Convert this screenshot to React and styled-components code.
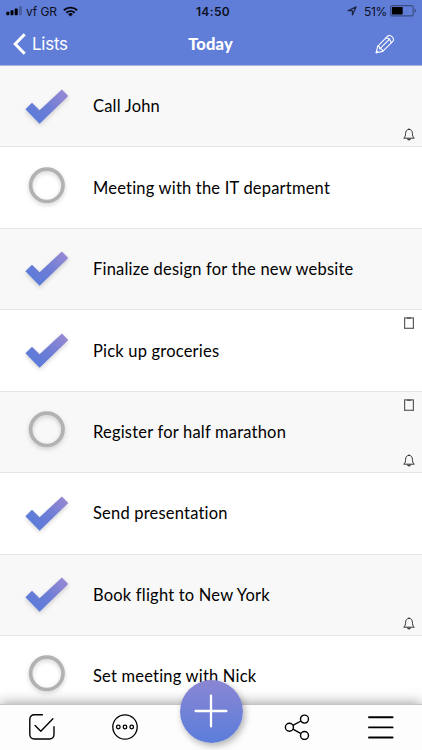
import styled, { createGlobalStyle } from 'styled-components'

const tasks = [
  { id: 1, title: 'Call John', done: true, alarm: true },
  { id: 2, title: 'Meeting with the IT department' },
  { id: 3, title: 'Finalize design for the new website', done: true },
  { id: 4, title: 'Pick up groceries', done: true, note: true },
  { id: 5, title: 'Register for half marathon', note: true, alarm: true },
  { id: 6, title: 'Send presentation', done: true },
  { id: 7, title: 'Book flight to New York', done: true, alarm: true },
  { id: 8, title: 'Set meeting with Nick' },
]

const SignalIcon = () => (
  <svg width="17" height="10" viewBox="0 0 17 10">
    <rect x="0.3" y="5.8" width="3" height="3.4" rx="0.7" />
    <rect x="4.5" y="4.3" width="3" height="4.9" rx="0.7" />
    <rect x="8.7" y="2.4" width="3" height="6.8" rx="0.7" />
    <rect x="12.9" y="0.2" width="3" height="9" rx="0.7" opacity="0.25" />
  </svg>
)

const WifiIcon = () => (
  <svg width="15" height="11" viewBox="0 0 15 11" fill="none" stroke="#06070d" strokeWidth="1.9">
    <path d="M0.9 4.3a9.4 9.4 0 0 1 13.2 0" />
    <path d="M3.3 6.8a6 6 0 0 1 8.4 0" />
    <path d="M7.5 10.6L5.1 8.2a3.4 3.4 0 0 1 4.8 0z" fill="#06070d" stroke="none" />
  </svg>
)

const LocationIcon = () => (
  <svg width="10" height="10" viewBox="0 0 10 10" fill="none" stroke="#1b2340" strokeWidth="1.2" strokeLinejoin="round">
    <path d="M9.1 0.9L5.4 9V4.7H0.9z" />
  </svg>
)

const BatteryIcon = () => (
  <svg width="27" height="12" viewBox="0 0 27 12">
    <rect x="0.6" y="0.6" width="22.6" height="10.3" rx="2" fill="none" stroke="#3b4d83" strokeWidth="1.1" />
    <rect x="1.9" y="1.9" width="10.8" height="7.7" rx="0.8" />
    <path d="M24.6 3.8v4c1-.4 1.4-1.1 1.4-2s-.4-1.6-1.4-2z" fill="#3b4d83" />
  </svg>
)

const BackIcon = () => (
  <svg width="13" height="22" viewBox="0 0 13 22" fill="none" stroke="#fff" strokeWidth="3">
    <path d="M11.7 1.2L2.2 11l9.5 9.8" />
  </svg>
)

const PencilIcon = () => (
  <svg width="20" height="20" viewBox="0 0 20 20" fill="none" stroke="#fff" strokeWidth="1.1" strokeLinejoin="round" strokeLinecap="round">
    <path d="M1.2 18.8L2.6 12.3L12.7 2.2C13.8 1.1 15.6 1.1 17 2.6C18.7 4.1 18.9 6.2 17.8 7.3L7.7 17.4z" />
    <path d="M2.6 12.3C4.2 12.1 4.9 13 4.8 14.8C6.6 14.7 7.6 15.6 7.7 17.4" />
    <path d="M4.8 14.8L14.8 4.9M11 3.9C13.4 3.9 16 6.4 16.1 9" />
    <path d="M1.2 18.8l0.4-2 1.5 1.6z" fill="#fff" />
  </svg>
)

const CheckMark = () => (
  <svg width="44" height="36" viewBox="0 0 44 36">
    <defs>
      <linearGradient id="check" gradientUnits="userSpaceOnUse" x1="8" y1="32" x2="38" y2="2">
        <stop offset="0" stopColor="#5b7bda" />
        <stop offset="0.45" stopColor="#6b7dd6" />
        <stop offset="1" stopColor="#9588d3" />
      </linearGradient>
    </defs>
    <path d="M0.4 20.2L7 13.7L14.6 21.2L36.9 0.4L43.3 6.9L14.6 34.7z" fill="url(#check)" />
  </svg>
)

const EmptyCircle = () => (
  <svg width="44" height="37" viewBox="0 0 44 37">
    <circle cx="21.8" cy="18.3" r="16.2" fill="none" stroke="#b2b2b2" strokeWidth="3.7" />
  </svg>
)

const BellIcon = () => (
  <svg width="12" height="13" viewBox="0 0 12 13" fill="none" stroke="#333" strokeWidth="1" strokeLinejoin="round">
    <path d="M0.7 10.2C2.3 8.9 2.5 7.5 2.6 5.2C2.7 2.8 4 1.4 6 1.4S9.3 2.8 9.4 5.2C9.5 7.5 9.7 8.9 11.3 10.2z" />
    <path d="M4.6 10.6C4.8 12.3 7.2 12.3 7.4 10.6M6 0.4v1" strokeWidth="1.2" />
  </svg>
)

const NoteIcon = () => (
  <svg width="10" height="12" viewBox="0 0 10 12" fill="none" stroke="#5c5c5c" strokeWidth="1.2">
    <rect x="0.6" y="0.9" width="8.8" height="10.4" />
    <path d="M3 1.2h4" strokeWidth="1.5" />
  </svg>
)

const DoneIcon = () => (
  <svg width="26" height="26" viewBox="0 0 26 26" fill="none" stroke="#000" strokeWidth="1.4" strokeLinecap="round" strokeLinejoin="round">
    <path d="M13.4 0.8H5.2A4.4 4.4 0 0 0 0.8 5.2V20.6A4.4 4.4 0 0 0 5.2 25H20.6A4.4 4.4 0 0 0 25 20.6V12.8" />
    <path d="M6.1 11.5L11.8 17.2L23.9 4.8" />
  </svg>
)

const MoreIcon = () => (
  <svg width="26" height="26" viewBox="0 0 26 26" fill="none" stroke="#000" strokeWidth="1.3">
    <circle cx="13" cy="13" r="12.2" />
    <circle cx="6.3" cy="13" r="1.8" />
    <circle cx="13" cy="13" r="1.8" />
    <circle cx="19.7" cy="13" r="1.8" />
  </svg>
)

const ShareIcon = () => (
  <svg width="26" height="26" viewBox="0 0 26 26" fill="none" stroke="#000" strokeWidth="1.4">
    <circle cx="5.4" cy="13.3" r="4" />
    <circle cx="20.5" cy="5.1" r="4" />
    <circle cx="20.5" cy="21.5" r="4" />
    <path d="M8.9 11.4L17 7M8.9 15.2L17 19.6" />
  </svg>
)

const MenuIcon = () => (
  <svg width="26" height="26" viewBox="0 0 26 26" stroke="#000" strokeWidth="1.9" strokeLinecap="round">
    <path d="M1 3.3h23.6M1 13.4h23.6M1 23.5h23.6" />
  </svg>
)

const PlusIcon = () => (
  <svg width="34" height="34" viewBox="0 0 34 34" stroke="#fff" strokeWidth="2.3" strokeLinecap="round">
    <path d="M17 1.6v30.8M1.6 17h30.8" />
  </svg>
)

const TaskRow = ({ task, shaded }) => (
  <Row $shaded={shaded}>
    <Mark $done={task.done}>{task.done ? <CheckMark /> : <EmptyCircle />}</Mark>
    <Title>{task.title}</Title>
    <Flags>
      <span>{task.note && <NoteIcon />}</span>
      <span>{task.alarm && <BellIcon />}</span>
    </Flags>
  </Row>
)

const App = () => {
  return (
    <Screen>
      <GlobalStyle />
      <Header>
        <StatusBar>
          <Carrier>
            <SignalIcon />
            <span>vf GR</span>
            <WifiIcon />
          </Carrier>
          <Clock>14:50</Clock>
          <Power>
            <LocationIcon />
            <span>51%</span>
            <BatteryIcon />
          </Power>
        </StatusBar>
        <NavBar>
          <BackButton><BackIcon />Lists</BackButton>
          <NavTitle>Today</NavTitle>
          <EditButton><PencilIcon /></EditButton>
        </NavBar>
      </Header>

      <List>
        {tasks.map((task, index) => (
          <TaskRow key={task.id} task={task} shaded={index % 2 === 0} />
        ))}
      </List>

      <TabBar>
        <TabButton><DoneIcon /></TabButton>
        <TabButton><MoreIcon /></TabButton>
        <AddButton><PlusIcon /></AddButton>
        <TabButton><ShareIcon /></TabButton>
        <TabButton><MenuIcon /></TabButton>
      </TabBar>
    </Screen>
  )
}

const GlobalStyle = createGlobalStyle`
  * {
    box-sizing: border-box;
  }
  body {
    margin: 0;
    overflow: hidden;
  }
  button {
    margin: 0;
    padding: 0;
    border: none;
    background: none;
    font-family: inherit;
  }
  svg {
    display: block;
    flex-shrink: 0;
  }
`

const Screen = styled.div`
  width: 422px;
  height: 750px;
  display: flex;
  flex-direction: column;
  overflow: hidden;
  background: #fff;
  font-family: Lato, 'Open Sans', sans-serif;
`

const Header = styled.header`
  flex: 0 0 65.5px;
  background: #607dd8;
  border-bottom: 1px solid #a9b4dc;
`

const StatusBar = styled.div`
  height: 22px;
  display: grid;
  grid-template-columns: 1fr auto 1fr;
  align-items: center;
  padding: 0 5px 0 6px;
  font-family: Inter, sans-serif;
  font-size: 12px;
  color: #0c1020;
`

const Carrier = styled.div`
  display: flex;
  align-items: center;
  span {
    margin: 0 6px 0 3px;
    letter-spacing: -0.1px;
  }
`

const Clock = styled.div`
  font-weight: 600;
  letter-spacing: 0.35px;
  margin-left: 3px;
`

const Power = styled.div`
  display: flex;
  align-items: center;
  justify-content: flex-end;
  span {
    margin: 0 3px 0 7px;
    letter-spacing: -0.3px;
  }
`

const NavBar = styled.div`
  height: 43px;
  display: grid;
  grid-template-columns: 1fr auto 1fr;
  align-items: center;
  padding: 0 27px 0 13px;
`

const BackButton = styled.button`
  display: flex;
  align-items: center;
  gap: 6px;
  font-family: Inter, sans-serif;
  font-size: 17px;
  font-weight: 400;
  letter-spacing: -0.25px;
  color: #fff;
`

const NavTitle = styled.h1`
  margin: 0 0 0 13px;
  font-size: 16.5px;
  font-weight: 900;
  letter-spacing: 0.15px;
  color: #fff;
`

const EditButton = styled.button`
  justify-self: end;
`

const List = styled.div`
  flex: 1;
  min-height: 0;
  overflow: hidden;
`

const Row = styled.div`
  height: 81.45px;
  display: flex;
  border-bottom: 1px solid #e6e6e7;
  background: ${({ $shaded }) => ($shaded ? '#f8f8f8' : '#fff')};
`

const Mark = styled.div`
  width: 93px;
  padding: ${({ $done }) => ($done ? '22.5px' : '19.3px')} 0 0 25px;
  svg {
    filter: drop-shadow(0 2px 2px rgba(0, 0, 0, 0.17));
  }
`

const Title = styled.div`
  flex: 1;
  align-self: center;
  font-size: 16.5px;
  letter-spacing: 0.2px;
  white-space: nowrap;
  color: #000;
`

const Flags = styled.div`
  display: flex;
  flex-direction: column;
  justify-content: space-between;
  align-items: center;
  width: 14px;
  margin-right: 6px;
  padding: 7px 0 5px;
`

const TabBar = styled.nav`
  position: relative;
  flex: 0 0 46px;
  display: grid;
  grid-template-columns: 83px 84px 88px 84px 83px;
  align-items: center;
  justify-items: center;
  padding-bottom: 1px;
  background: #fdfdfd;
  border-top: 1px solid #c4c4c4;
  box-shadow: 0 -1px 12px rgba(0, 0, 0, 0.38);
`

const TabButton = styled.button`
  display: flex;
`

const AddButton = styled.button`
  display: flex;
  align-items: center;
  justify-content: center;
  width: 63px;
  height: 63px;
  margin-top: -32px;
  border-radius: 50%;
  background: linear-gradient(#8a86d3, #5b7dda);
  box-shadow: 2px 3px 7px rgba(0, 0, 0, 0.3);
`

export default App
